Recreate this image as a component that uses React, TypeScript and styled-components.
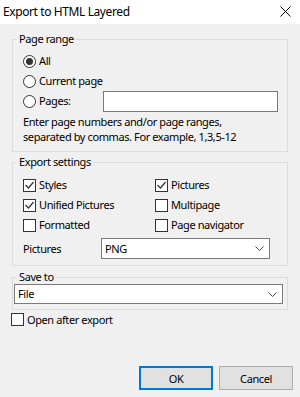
import React from 'react'
import styled, { createGlobalStyle } from 'styled-components'

const GlobalStyle = createGlobalStyle`
  html, body {
    margin: 0;
    padding: 0;
    background: #f0f0f0;
  }
  body {
    font-family: "Noto Sans", "Liberation Sans", sans-serif;
    font-size: 11px;
    letter-spacing: -0.4px;
    color: #000;
  }
`

const Window = styled.div`
  width: 300px;
  height: 397px;
  background: #f0f0f0;
  display: flex;
  flex-direction: column;
  overflow: hidden;
`

const TitleBar = styled.div`
  height: 24px;
  flex: none;
  background: #fff;
  display: flex;
  align-items: center;
  justify-content: space-between;
  padding: 0 9px 1px 3px;
  box-sizing: border-box;
`

const Title = styled.span`
  font-size: 12px;
  letter-spacing: -0.4px;
  line-height: 16px;
`

const Body = styled.div`
  padding: 0 12px;
  display: flex;
  flex-direction: column;
`

const Group = styled.fieldset<{ $top: number; $bottom: number }>`
  margin: ${(p) => p.$top}px 0 0;
  padding: 0 0 ${(p) => p.$bottom}px;
  border: 1px solid #dcdcdc;
  min-width: 0;
  width: 276px;
  box-sizing: border-box;
`

const Legend = styled.legend`
  margin-left: 4px;
  padding: 0 2px;
  line-height: 14px;
`

const Inset = styled.div<{ $top: number; $left?: number }>`
  padding: ${(p) => p.$top}px 0 0 ${(p) => p.$left ?? 10}px;
  display: flex;
  flex-direction: column;
`

const Row = styled.label`
  height: 20px;
  display: flex;
  align-items: center;
  line-height: 16px;
  white-space: nowrap;
`

const RadioCircle = styled.span<{ $on?: boolean }>`
  width: 13px;
  height: 13px;
  box-sizing: border-box;
  border: 1px solid #333;
  border-radius: 50%;
  background: #fff;
  display: flex;
  align-items: center;
  justify-content: center;
  margin-right: 3px;
  flex: none;

  &::after {
    content: '';
    display: ${(p) => (p.$on ? 'block' : 'none')};
    width: 7px;
    height: 7px;
    border-radius: 50%;
    background: #333;
  }
`

const Box = styled.span`
  width: 13px;
  height: 13px;
  box-sizing: border-box;
  border: 1px solid #333;
  background: #fff;
  margin-right: 3px;
  flex: none;
  display: flex;
`

const TextBox = styled.div`
  margin-left: auto;
  margin-right: 9px;
  width: 175px;
  height: 21px;
  box-sizing: border-box;
  border: 1px solid #7a7a7a;
  background: #fff;
`

const Help = styled.p`
  margin: 3px 0 0;
  line-height: 15px;
`

const CheckGrid = styled.div`
  display: grid;
  grid-template-columns: 132px 1fr;
`

const PictureRow = styled.div`
  margin-top: 3px;
  height: 21px;
  display: flex;
  align-items: center;
`

const FieldLabel = styled.span`
  width: 78px;
`

const Combo = styled.div<{ $width: number; $height: number }>`
  width: ${(p) => p.$width}px;
  height: ${(p) => p.$height}px;
  box-sizing: border-box;
  border: 1px solid #7a7a7a;
  background: #fff;
  display: flex;
  align-items: center;
  justify-content: space-between;
  padding: 0 5px 0 3px;
  line-height: 16px;
`

const OpenRow = styled.label`
  margin: 3px 0 0 -1px;
  display: flex;
  align-items: center;
  height: 13px;
  line-height: 16px;
`

const Footer = styled.div`
  margin-top: auto;
  padding: 0 7px 7px 0;
  display: flex;
  justify-content: flex-end;
  gap: 6px;
`

const Button = styled.button<{ $primary?: boolean }>`
  width: 74px;
  height: 24px;
  box-sizing: border-box;
  background: #e1e1e1;
  border: ${(p) => (p.$primary ? '2px solid #0078d7' : '1px solid #adadad')};
  font: inherit;
  letter-spacing: inherit;
  color: #000;
  padding: 0;
`

const Check = ({ on }: { on?: boolean }) => (
  <Box>
    {on && (
      <svg width="11" height="11" viewBox="0 0 11 11">
        <polyline points="1.5,5 4.5,8 9.5,2" fill="none" stroke="#333" strokeWidth="1.2" />
      </svg>
    )}
  </Box>
)

const Chevron = () => (
  <svg width="9" height="5" viewBox="0 0 9 5">
    <polyline points="0.5,0.5 4.5,4.5 8.5,0.5" fill="none" stroke="#444" strokeWidth="1" />
  </svg>
)

const CloseIcon = () => (
  <svg width="11" height="11" viewBox="0 0 11 11">
    <path d="M0.5 0.5 L10.5 10.5 M10.5 0.5 L0.5 10.5" stroke="#000" strokeWidth="1" />
  </svg>
)

export default function App() {
  return (
    <Window>
      <GlobalStyle />
      <TitleBar>
        <Title>Export to HTML Layered</Title>
        <CloseIcon />
      </TitleBar>
      <Body>
        <Group $top={8} $bottom={7}>
          <Legend>Page range</Legend>
          <Inset $top={5}>
            <Row>
              <RadioCircle $on />
              All
            </Row>
            <Row>
              <RadioCircle />
              Current page
            </Row>
            <Row>
              <RadioCircle />
              Pages:
              <TextBox />
            </Row>
            <Help>
              Enter page numbers and/or page ranges,
              <br />
              separated by commas. For example, 1,3,5-12
            </Help>
          </Inset>
        </Group>

        <Group $top={3} $bottom={6}>
          <Legend>Export settings</Legend>
          <Inset $top={6}>
            <CheckGrid>
              <Row>
                <Check on />
                Styles
              </Row>
              <Row>
                <Check on />
                Pictures
              </Row>
              <Row>
                <Check on />
                Unified Pictures
              </Row>
              <Row>
                <Check />
                Multipage
              </Row>
              <Row>
                <Check />
                Formatted
              </Row>
              <Row>
                <Check />
                Page navigator
              </Row>
            </CheckGrid>
            <PictureRow>
              <FieldLabel>Pictures</FieldLabel>
              <Combo $width={169} $height={21}>
                PNG
                <Chevron />
              </Combo>
            </PictureRow>
          </Inset>
        </Group>

        <Group $top={4} $bottom={5}>
          <Legend>Save to</Legend>
          <Inset $top={0} $left={1}>
            <Combo $width={269} $height={20}>
              File
              <Chevron />
            </Combo>
          </Inset>
        </Group>

        <OpenRow>
          <Check />
          Open after export
        </OpenRow>
      </Body>
      <Footer>
        <Button $primary>OK</Button>
        <Button>Cancel</Button>
      </Footer>
    </Window>
  )
}
